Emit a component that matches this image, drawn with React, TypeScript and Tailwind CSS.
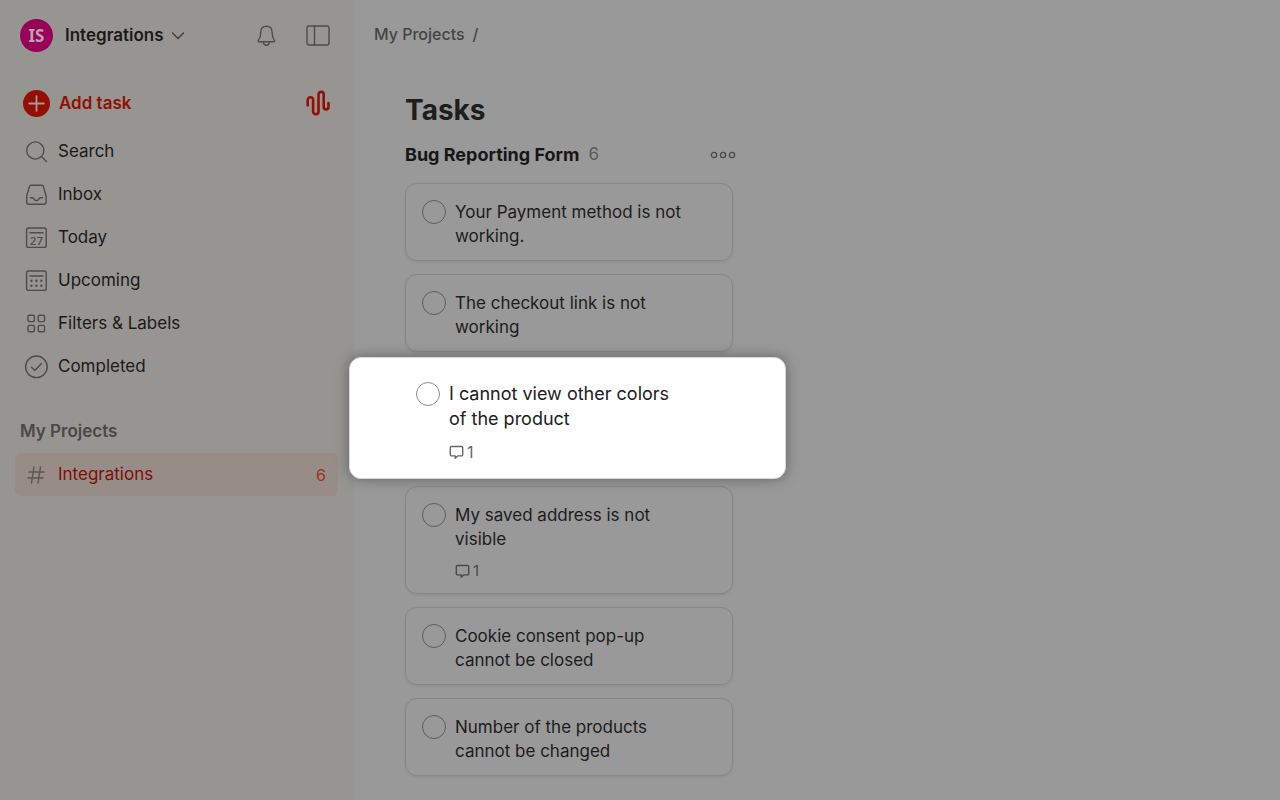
import type { ReactNode } from "react";

type Task = {
  title: [string, string];
  comments?: number;
  highlighted?: boolean;
};

const TASKS: Task[] = [
  { title: ["Your Payment method is not", "working."] },
  { title: ["The checkout link is not", "working"] },
  { title: ["I cannot view other colors", "of the product"], comments: 1, highlighted: true },
  { title: ["My saved address is not", "visible"], comments: 1 },
  { title: ["Cookie consent pop-up", "cannot be closed"] },
  { title: ["Number of the products", "cannot be changed"] },
];

function Icon({ children, className }: { children: ReactNode; className?: string }) {
  return (
    <svg
      width="24"
      height="24"
      viewBox="0 0 24 24"
      fill="none"
      stroke="currentColor"
      strokeWidth="1.4"
      strokeLinecap="round"
      strokeLinejoin="round"
      aria-hidden="true"
      className={className}
    >
      {children}
    </svg>
  );
}

const NAV = [
  {
    label: "Search",
    icon: (
      <>
        <circle cx="11.3" cy="10.5" r="8.6" />
        <path d="M17.5 16.6l5 5" />
      </>
    ),
  },
  {
    label: "Inbox",
    icon: (
      <>
        <path d="M7.2 2.2h10.4c.9 0 1.6.5 1.8 1.4l2.7 9.4v6a2.200 2.200 0 0 1-2.200 2.200h-15A2.200 2.200 0 0 1 2.700 19v-6l2.700-9.400c.2-.9.9-1.400 1.800-1.400z" />
        <path d="M6.400 14.700h1.900c.7 0 1 .3 1.400 1 .6 1.100 1.400 2 2.700 2s2.100-.9 2.700-2c.4-.7.7-1 1.400-1h1.900" />
      </>
    ),
  },
  {
    label: "Today",
    icon: (
      <>
        <rect x="2.6" y="2" width="19.6" height="19.4" rx="2" />
        <path d="M6 6.8h13" />
        <text x="12.4" y="18.6" textAnchor="middle" fontSize="11.5" fill="currentColor" stroke="none" className="font-['Open_Sans',sans-serif] font-semibold">
          27
        </text>
      </>
    ),
  },
  {
    label: "Upcoming",
    icon: (
      <>
        <rect x="2.6" y="2" width="19.6" height="19.4" rx="2" />
        <path d="M6 7h13" />
        <path d="M7.4 11.7h.01M12.4 11.7h.01M17.4 11.7h.01M7.4 16.7h.01M12.4 16.7h.01M17.4 16.7h.01" strokeWidth="2.4" />
      </>
    ),
  },
  {
    label: "Filters & Labels",
    icon: (
      <>
        <rect x="4" y="3.2" width="6.4" height="6.4" rx="1.5" />
        <rect x="14.2" y="3.2" width="6.4" height="6.4" rx="1.5" />
        <rect x="4" y="13.4" width="6.4" height="6.4" rx="1.5" />
        <rect x="14.2" y="13.4" width="6.4" height="6.4" rx="1.5" />
      </>
    ),
  },
  {
    label: "Completed",
    icon: (
      <>
        <circle cx="12.4" cy="11.8" r="10.8" />
        <path d="M7.6 12.2l3.2 3.2 6.6-6.8" />
      </>
    ),
  },
];

function Sidebar() {
  return (
    <aside className="w-[354px] shrink-0 bg-[#979592] px-[15px]">
      <header className="flex h-[71px] items-center pr-[9px] pl-[5px]">
        <button className="flex items-center text-[#1b1a19]">
          <span className="mr-3 flex size-[33px] items-center justify-center rounded-full bg-[#990057] font-['Noto_Sans',sans-serif] text-[17px] font-bold text-[#b8a5b0]">
            IS
          </span>
          <span className="text-[17px] font-semibold">Integrations</span>
          <svg width="14" height="8" viewBox="0 0 14 8" fill="none" stroke="#3b3a39" strokeWidth="1.2" strokeLinecap="round" strokeLinejoin="round" className="ml-[7px]" aria-hidden="true">
            <path d="M1.5 1L7 6.5 12.5 1" />
          </svg>
        </button>
        <button aria-label="Notifications" className="ml-auto text-[#4d4c4a]">
          <Icon>
            <path d="M12.400 2.300c-3.700 0-5.700 2.700-5.700 6.100 0 4.400-.9 6-2.200 7.800-.7.900-.3 1.600.6 1.600h14.600c.9 0 1.300-.7.600-1.600-1.300-1.800-2.200-3.400-2.200-7.800 0-3.400-2-6.100-5.700-6.100z" />
            <path d="M9.400 18.200c.2 1.900 1.300 3 3 3s2.800-1.100 3-3" />
          </Icon>
        </button>
        <button aria-label="Toggle sidebar" className="ml-7 text-[#4d4c4a]">
          <Icon>
            <rect x="1" y="2" width="22" height="19" rx="2" />
            <path d="M8.5 2v19" />
          </Icon>
        </button>
      </header>

      <div className="mt-[11px] mb-1 flex h-11 items-center pr-[9px] pl-[7px]">
        <button className="flex items-center gap-[9px] text-[17px] font-semibold text-[#930f06]">
          <svg width="28" height="28" viewBox="0 0 28 28" aria-hidden="true">
            <circle cx="14.5" cy="13.5" r="13.5" fill="currentColor" />
            <path d="M14.500 6.200v14.600M7.200 13.500h14.600" stroke="#a49b96" strokeWidth="1.8" strokeLinecap="round" />
          </svg>
          Add task
        </button>
        <button aria-label="Record task" className="ml-auto text-[#930f06]">
          <svg width="24" height="28" viewBox="0 0 24 28" fill="none" stroke="currentColor" strokeWidth="2.6" strokeLinecap="round" aria-hidden="true">
            <path d="M1.7 15.500v-5.500a2.700 2.700 0 0 1 5.400 0v11.500a2.700 2.700 0 0 0 5.400 0v-17a2.600 2.600 0 0 1 5.200 0V17a2.400 2.400 0 0 0 4.800 0v-4" />
          </svg>
        </button>
      </div>

      <nav>
        {NAV.map((item) => (
          <a key={item.label} href="#" className="flex h-[43px] items-center gap-[10px] pl-[9px] text-[17px] text-[#1b1a19]">
            <Icon className="text-[#4d4c4a]">{item.icon}</Icon>
            {item.label}
          </a>
        ))}
      </nav>

      <h2 className="mt-[22px] flex h-[43px] items-center pl-[5px] text-[17px] font-semibold text-[#4a4846]">
        My Projects
      </h2>
      <a href="#" className="mr-px flex h-[43px] items-center gap-[10px] rounded-md bg-[#988d86] pr-3 pl-[9px] text-[17px] text-[#7e0e09]">
        <Icon className="text-[#5a5654]">
          <path d="M10 4L7.5 20M16.500 4L14 20M5 9h15M4 15h15" />
        </Icon>
        Integrations
        <span className="ml-auto text-base text-[#9c302b]">6</span>
      </a>
    </aside>
  );
}

function CommentCount({ count }: { count: number }) {
  return (
    <p className="flex items-center gap-[3px]">
      <svg width="15" height="15" viewBox="0 0 15 15" fill="none" stroke="currentColor" strokeWidth="1.4" strokeLinejoin="round" aria-hidden="true">
        <path d="M2.500 1.500h10a1.200 1.200 0 0 1 1.200 1.200v7a1.200 1.200 0 0 1-1.200 1.200H8.700l-2.500 2.400v-2.400H2.500a1.200 1.200 0 0 1-1.200-1.200v-7a1.200 1.200 0 0 1 1.200-1.200z" />
      </svg>
      {count}
    </p>
  );
}

function TaskCard({ task }: { task: Task }) {
  const [first, second] = task.title;

  return (
    <article className="flex gap-[9px] rounded-xl border border-[#868686] px-4 pt-4 pb-3 shadow-[0_1px_3px_rgba(0,0,0,0.08)]">
      <button aria-label={`Complete ${first} ${second}`} className="size-6 shrink-0 rounded-full border border-[#5c5c5c]" />
      <div className="text-[#1c1c1c]">
        <h4 className="text-[17px] leading-6">
          {first}
          <br />
          {second}
        </h4>
        {task.comments && (
          <div className="-mb-0.5 pt-2 text-[15px] leading-6 text-[#4a4a4a]">
            <CommentCount count={task.comments} />
          </div>
        )}
      </div>
    </article>
  );
}

// Raised card that spills over the edges of its slot in the column.
function HighlightedTask({ task }: { task: Task }) {
  const [first, second] = task.title;

  return (
    <div className="relative h-[108px]">
      <article className="absolute -top-2 -right-[53px] -bottom-1.5 -left-14 z-10 flex gap-[9px] rounded-xl border border-[#d8d8d8] bg-white pt-[23px] pl-[66px] shadow-[0_0_14px_rgba(0,0,0,0.35)]">
        <button aria-label={`Complete ${first} ${second}`} className="mt-px size-6 shrink-0 rounded-full border border-[#8c8c8c]" />
        <div className="text-[#202020]">
          <h4 className="text-lg leading-[25px]">
            {first}
            <br />
            {second}
          </h4>
          <div className="pt-[9px] text-base text-[#666]">
            <CommentCount count={task.comments ?? 0} />
          </div>
        </div>
      </article>
    </div>
  );
}

export default function App() {
  return (
    <div className="flex min-h-screen bg-[#999] font-[Inter,'Liberation_Sans',sans-serif]">
      <Sidebar />
      <main className="min-w-0 flex-1">
        <nav aria-label="Breadcrumb" className="flex h-[68px] items-center gap-2 pl-5 text-base font-medium text-[#444]">
          <a href="#">My Projects</a>
          <span>/</span>
        </nav>
        <div className="px-[51px] pb-6">
          <h1 className="pt-[22px] text-[28px] leading-10 font-bold text-[#1e1e1e]">Tasks</h1>
          <section className="w-[328px]">
            <header className="mb-[3px] flex h-[50px] items-center">
              <h3 className="text-lg font-bold text-[#161616]">Bug Reporting Form</h3>
              <span className="ml-[9px] text-[17px] text-[#5a5a5a]">6</span>
              <button aria-label="Section options" className="ml-auto -mr-[3px] text-[#4a4a4a]">
                <svg width="26" height="8" viewBox="0 0 26 8" fill="none" stroke="currentColor" strokeWidth="1.4" aria-hidden="true">
                  <circle cx="4" cy="4" r="2.6" />
                  <circle cx="13" cy="4" r="2.6" />
                  <circle cx="22" cy="4" r="2.6" />
                </svg>
              </button>
            </header>
            <ul className="flex flex-col gap-[13px]">
              {TASKS.map((task) => (
                <li key={task.title[0]}>
                  {task.highlighted ? <HighlightedTask task={task} /> : <TaskCard task={task} />}
                </li>
              ))}
            </ul>
          </section>
        </div>
      </main>
    </div>
  );
}
